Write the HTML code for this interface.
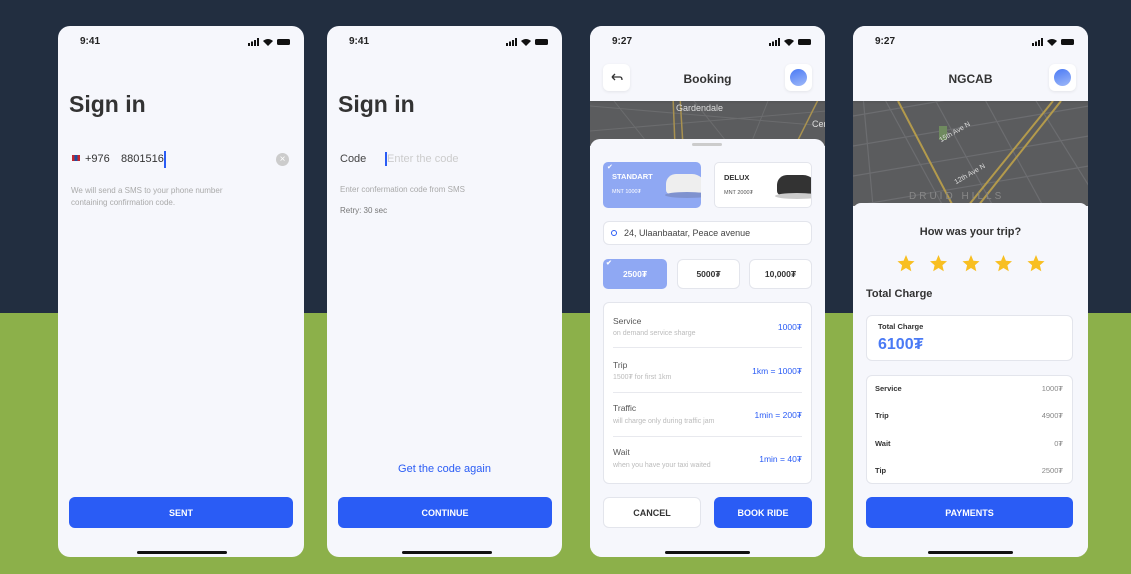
<!DOCTYPE html>
<html><head><meta charset="utf-8"><style>
*{margin:0;padding:0;box-sizing:border-box}
body{width:1131px;height:574px;position:relative;overflow:hidden;font-family:"Liberation Sans",sans-serif;background:#8cb04a}
.top{position:absolute;left:0;top:0;width:1131px;height:313px;background:#222e40}
.ph{position:absolute;top:26px;width:236px;height:531px;background:#f6f7fc;border-radius:12px;overflow:hidden}
.a{position:absolute;white-space:nowrap}
.time{position:absolute;top:10px;left:22px;font-size:10px;font-weight:bold;color:#222}
.st{position:absolute;top:12px;right:12px;width:44px;height:8px}
.home{position:absolute;bottom:3px;left:78px;width:90px;height:3px;border-radius:2px;background:#111}
.btn{position:absolute;height:31px;border-radius:6px;background:#2a5cf5;color:#fff;font-size:9px;font-weight:bold;display:flex;align-items:center;justify-content:center}
.wbtn{background:#fff;color:#333;border:1px solid #e3e5ec}
.box{position:absolute;background:#fff;border:1px solid #e3e5ec;border-radius:6px}
.map{position:absolute;left:0;width:236px;background:#5b5c5e}
.hdr{position:absolute;left:0;top:0;width:236px;height:75px;background:#f6f7fc}
.ib{position:absolute;width:27px;height:27px;background:#fff;border-radius:6px;box-shadow:0 1px 3px rgba(0,0,0,.08)}
.av{position:absolute;left:5px;top:5px;width:17px;height:17px;border-radius:50%;background:linear-gradient(160deg,#4a7af5,#9fb9f8)}
.g{color:#aaa;font-size:7.5px}
.b{color:#2a5cf5}
</style></head><body>
<div class="top"></div>

<!-- phone 1 -->
<div class="ph" style="left:58px;width:246px">
<div class="time">9:41</div>
<svg class="st" viewBox="0 0 44 8"><rect x="0" y="5" width="2" height="3" fill="#111"/><rect x="3" y="3.5" width="2" height="4.5" fill="#111"/><rect x="6" y="2" width="2" height="6" fill="#111"/><rect x="9" y="0" width="2" height="8" fill="#111"/><path d="M15 3 Q20 -1 25 3 L20 8Z" fill="#111"/><rect x="29" y="1" width="13" height="6" rx="1.5" fill="#111"/></svg>
<div class="a" style="left:11px;top:65px;font-size:23px;font-weight:bold;color:#333">Sign in</div>
<div class="a" style="left:14px;top:129px;width:8px;height:6px;background:linear-gradient(90deg,#c4272f 33%,#1e4fa0 33%,#1e4fa0 66%,#c4272f 66%)"></div>
<div class="a" style="left:27px;top:127px;font-size:11px;color:#333">+976</div>
<div class="a" style="left:63px;top:127px;font-size:11px;color:#333">8801516</div>
<div class="a" style="left:106px;top:125px;width:1.5px;height:17px;background:#2a5cf5"></div>
<div class="a" style="left:218px;top:127px;width:13px;height:13px;border-radius:50%;background:#ccc;color:#fff;font-size:10px;text-align:center;line-height:13px">×</div>
<div class="a g" style="left:13px;top:159px;line-height:12px;font-size:8px">We will send a SMS to your phone number<br>containing confirmation code.</div>
<div class="btn" style="left:11px;top:471px;width:224px">SENT</div>
<div class="home" style="left:79px"></div>
</div>

<!-- phone 2 -->
<div class="ph" style="left:327px;width:235px">
<div class="time">9:41</div>
<svg class="st" viewBox="0 0 44 8"><rect x="0" y="5" width="2" height="3" fill="#111"/><rect x="3" y="3.5" width="2" height="4.5" fill="#111"/><rect x="6" y="2" width="2" height="6" fill="#111"/><rect x="9" y="0" width="2" height="8" fill="#111"/><path d="M15 3 Q20 -1 25 3 L20 8Z" fill="#111"/><rect x="29" y="1" width="13" height="6" rx="1.5" fill="#111"/></svg>
<div class="a" style="left:11px;top:65px;font-size:23px;font-weight:bold;color:#333">Sign in</div>
<div class="a" style="left:13px;top:127px;font-size:11px;color:#444">Code</div>
<div class="a" style="left:58px;top:126px;width:1.5px;height:14px;background:#2a5cf5"></div>
<div class="a" style="left:60px;top:127px;font-size:11px;color:#ccc">Enter the code</div>
<div class="a g" style="left:13px;top:159px;font-size:8px">Enter confermation code from SMS</div>
<div class="a" style="left:13px;top:180px;font-size:8px;color:#777">Retry: 30 sec</div>
<div class="a b" style="left:0;width:235px;text-align:center;top:437px;font-size:11px">Get the code again</div>
<div class="btn" style="left:11px;top:471px;width:214px">CONTINUE</div>
<div class="home" style="left:75px"></div>
</div>

<!-- phone 3 -->
<div class="ph" style="left:590px;width:235px">
<div class="map" style="top:70px;height:50px">
<svg width="236" height="50"><g stroke="#6b6c6e" stroke-width="1" fill="none"><path d="M0 10 L236 30"/><path d="M20 0 L60 50"/><path d="M100 0 L140 50"/><path d="M180 0 L160 50"/><path d="M0 35 L236 15"/></g><g stroke="#a89150" stroke-width="1.5" fill="none"><path d="M90 0 L93 50"/><path d="M83 0 L85 50"/><path d="M230 0 L205 50"/></g></svg>
<div class="a" style="left:86px;top:7px;font-size:9px;color:#ddd">Gardendale</div>
<div class="a" style="left:222px;top:23px;font-size:9px;color:#ddd">Cen</div>
</div>
<div class="hdr" style="box-shadow:0 1px 2px rgba(0,0,0,.1)"></div>
<div class="time">9:27</div>
<svg class="st" viewBox="0 0 44 8"><rect x="0" y="5" width="2" height="3" fill="#111"/><rect x="3" y="3.5" width="2" height="4.5" fill="#111"/><rect x="6" y="2" width="2" height="6" fill="#111"/><rect x="9" y="0" width="2" height="8" fill="#111"/><path d="M15 3 Q20 -1 25 3 L20 8Z" fill="#111"/><rect x="29" y="1" width="13" height="6" rx="1.5" fill="#111"/></svg>
<div class="ib" style="left:13px;top:38px"><svg width="27" height="27"><path d="M9 13 L17 13 Q19 13 19 16 M9 13 L12 10 M9 13 L12 16" stroke="#333" stroke-width="1.3" fill="none"/></svg></div>
<div class="a" style="left:0;width:235px;text-align:center;top:46px;font-size:12px;font-weight:bold;color:#333">Booking</div>
<div class="ib" style="left:195px;top:38px"><div class="av"></div></div>
<div class="a" style="left:0;top:113px;width:235px;height:420px;background:#f6f7fc;border-radius:10px 10px 0 0"></div>
<div class="a" style="left:102px;top:117px;width:30px;height:3px;border-radius:2px;background:#ccc"></div>
<div class="a" style="left:13px;top:136px;width:98px;height:46px;background:#8fa8f3;border-radius:5px;overflow:hidden">
<div class="a" style="left:4px;top:1px;color:#fff;font-size:7px">✔</div>
<div class="a" style="left:9px;top:10px;color:#fff;font-size:7.5px;font-weight:bold">STANDART</div>
<div class="a" style="left:9px;top:27px;color:#fff;font-size:5.5px">MNT 1000₮</div>
<div class="a" style="left:63px;top:12px;width:40px;height:20px;background:#eee;border-radius:10px 14px 4px 4px"></div>
<div class="a" style="left:62px;top:30px;width:44px;height:6px;border-radius:50%;background:#7f92cf"></div>
</div>
<div class="a" style="left:124px;top:136px;width:98px;height:46px;background:#fff;border:1px solid #e3e5ec;border-radius:5px;overflow:hidden">
<div class="a" style="left:9px;top:10px;color:#333;font-size:7.5px;font-weight:bold">DELUX</div>
<div class="a" style="left:9px;top:27px;color:#555;font-size:5.5px">MNT 2000₮</div>
<div class="a" style="left:62px;top:12px;width:40px;height:20px;background:#333;border-radius:10px 14px 4px 4px"></div>
<div class="a" style="left:60px;top:30px;width:44px;height:6px;border-radius:50%;background:#ccc"></div>
</div>
<div class="box" style="left:13px;top:195px;width:209px;height:24px"><div class="a" style="left:7px;top:8px;width:6px;height:6px;border:1.5px solid #2a5cf5;border-radius:50%"></div><div class="a" style="left:20px;top:6px;font-size:9px;color:#444">24, Ulaanbaatar, Peace avenue</div></div>
<div class="a" style="left:13px;top:233px;width:64px;height:30px;background:#8fa8f3;border-radius:5px;color:#fff;font-size:8.5px;font-weight:bold;text-align:center;line-height:30px">2500₮<span style="position:absolute;left:3px;top:-10px;font-size:7px">✔</span></div>
<div class="box" style="left:87px;top:233px;width:63px;height:30px;font-size:8.5px;font-weight:bold;text-align:center;line-height:28px;color:#333">5000₮</div>
<div class="box" style="left:159px;top:233px;width:63px;height:30px;font-size:8.5px;font-weight:bold;text-align:center;line-height:28px;color:#333">10,000₮</div>
<div class="box" style="left:13px;top:276px;width:209px;height:182px">
<div class="a" style="left:9px;top:13px;font-size:8.5px;color:#555">Service</div><div class="a g" style="left:9px;top:27px;font-size:7px;color:#bbb">on demand service sharge</div><div class="a b" style="right:9px;top:19px;font-size:8.5px">1000₮</div>
<div class="a" style="left:9px;top:44px;width:189px;height:1px;background:#e8e9ee"></div>
<div class="a" style="left:9px;top:57px;font-size:8.5px;color:#555">Trip</div><div class="a g" style="left:9px;top:71px;font-size:7px;color:#bbb">1500₮ for first 1km</div><div class="a b" style="right:9px;top:63px;font-size:8.5px">1km = 1000₮</div>
<div class="a" style="left:9px;top:89px;width:189px;height:1px;background:#e8e9ee"></div>
<div class="a" style="left:9px;top:100px;font-size:8.5px;color:#555">Traffic</div><div class="a g" style="left:9px;top:115px;font-size:7px;color:#bbb">will charge only during traffic jam</div><div class="a b" style="right:9px;top:107px;font-size:8.5px">1min = 200₮</div>
<div class="a" style="left:9px;top:133px;width:189px;height:1px;background:#e8e9ee"></div>
<div class="a" style="left:9px;top:144px;font-size:8.5px;color:#555">Wait</div><div class="a g" style="left:9px;top:159px;font-size:7px;color:#bbb">when you have your taxi waited</div><div class="a b" style="right:9px;top:151px;font-size:8.5px">1min = 40₮</div>
</div>
<div class="btn wbtn" style="left:13px;top:471px;width:98px">CANCEL</div>
<div class="btn" style="left:124px;top:471px;width:98px">BOOK RIDE</div>
<div class="home" style="left:75px;width:85px"></div>
</div>

<!-- phone 4 -->
<div class="ph" style="left:853px;width:235px">
<div class="map" style="top:70px;height:110px">
<svg width="236" height="110"><g stroke="#6c6d70" stroke-width="1.2" fill="none"><path d="M0 20 L236 -20"/><path d="M0 50 L236 10"/><path d="M0 80 L236 40"/><path d="M0 110 L236 70"/><path d="M30 0 L90 110"/><path d="M80 0 L140 110"/><path d="M130 0 L190 110"/><path d="M180 0 L236 90"/><path d="M10 0 L20 110"/></g><g stroke="#b39a4c" stroke-width="2" fill="none"><path d="M45 5 L100 110"/><path d="M200 5 L115 110"/><path d="M208 5 L125 110"/></g><rect x="86" y="30" width="8" height="14" fill="#6f8a5f"/></svg>
<div class="a" style="left:85px;top:33px;font-size:7px;color:#ddd;transform:rotate(-30deg)">15th Ave N</div>
<div class="a" style="left:100px;top:75px;font-size:7px;color:#ddd;transform:rotate(-30deg)">12th Ave N</div>
<div class="a" style="left:56px;top:95px;font-size:10px;color:#888;letter-spacing:3px">DRUID HILLS</div>
</div>
<div class="hdr" style="box-shadow:0 1px 2px rgba(0,0,0,.1)"></div>
<div class="time">9:27</div>
<svg class="st" viewBox="0 0 44 8"><rect x="0" y="5" width="2" height="3" fill="#111"/><rect x="3" y="3.5" width="2" height="4.5" fill="#111"/><rect x="6" y="2" width="2" height="6" fill="#111"/><rect x="9" y="0" width="2" height="8" fill="#111"/><path d="M15 3 Q20 -1 25 3 L20 8Z" fill="#111"/><rect x="29" y="1" width="13" height="6" rx="1.5" fill="#111"/></svg>
<div class="a" style="left:0;width:235px;text-align:center;top:46px;font-size:12px;font-weight:bold;color:#333">NGCAB</div>
<div class="ib" style="left:196px;top:38px"><div class="av"></div></div>
<div class="a" style="left:0;top:177px;width:235px;height:360px;background:#f6f7fc;border-radius:8px 8px 0 0"></div>
<div class="a" style="left:0;width:235px;text-align:center;top:200px;font-size:11px;font-weight:bold;color:#333">How was your trip?</div>
<svg class="a" style="left:40px;top:228px" width="160" height="20" viewBox="0 0 160 20"><g fill="#f8bf22"><path id="s" d="M13 1 L15.4 6.7 L21.5 7.2 L16.9 11.2 L18.3 17.2 L13 14 L7.7 17.2 L9.1 11.2 L4.5 7.2 L10.6 6.7Z"/><use href="#s" x="32.5"/><use href="#s" x="65"/><use href="#s" x="97.5"/><use href="#s" x="130"/></g></svg>
<div class="a" style="left:13px;top:262px;font-size:11px;font-weight:bold;color:#333">Total Charge</div>
<div class="box" style="left:13px;top:289px;width:207px;height:46px"><div class="a" style="left:11px;top:6px;font-size:7.5px;font-weight:bold;color:#333">Total Charge</div><div class="a" style="left:11px;top:20px;font-size:16px;font-weight:bold;color:#4a7af5">6100₮</div></div>
<div class="box" style="left:13px;top:349px;width:207px;height:109px">
<div class="a" style="left:8px;top:8px;font-size:7.5px;font-weight:bold;color:#333">Service</div><div class="a" style="right:9px;top:8px;font-size:7.5px;color:#888">1000₮</div>
<div class="a" style="left:8px;top:35px;font-size:7.5px;font-weight:bold;color:#333">Trip</div><div class="a" style="right:9px;top:35px;font-size:7.5px;color:#888">4900₮</div>
<div class="a" style="left:8px;top:63px;font-size:7.5px;font-weight:bold;color:#333">Wait</div><div class="a" style="right:9px;top:63px;font-size:7.5px;color:#888">0₮</div>
<div class="a" style="left:8px;top:90px;font-size:7.5px;font-weight:bold;color:#333">Tip</div><div class="a" style="right:9px;top:90px;font-size:7.5px;color:#888">2500₮</div>
</div>
<div class="btn" style="left:13px;top:471px;width:207px">PAYMENTS</div>
<div class="home" style="left:75px;width:85px"></div>
</div>
</body></html>
